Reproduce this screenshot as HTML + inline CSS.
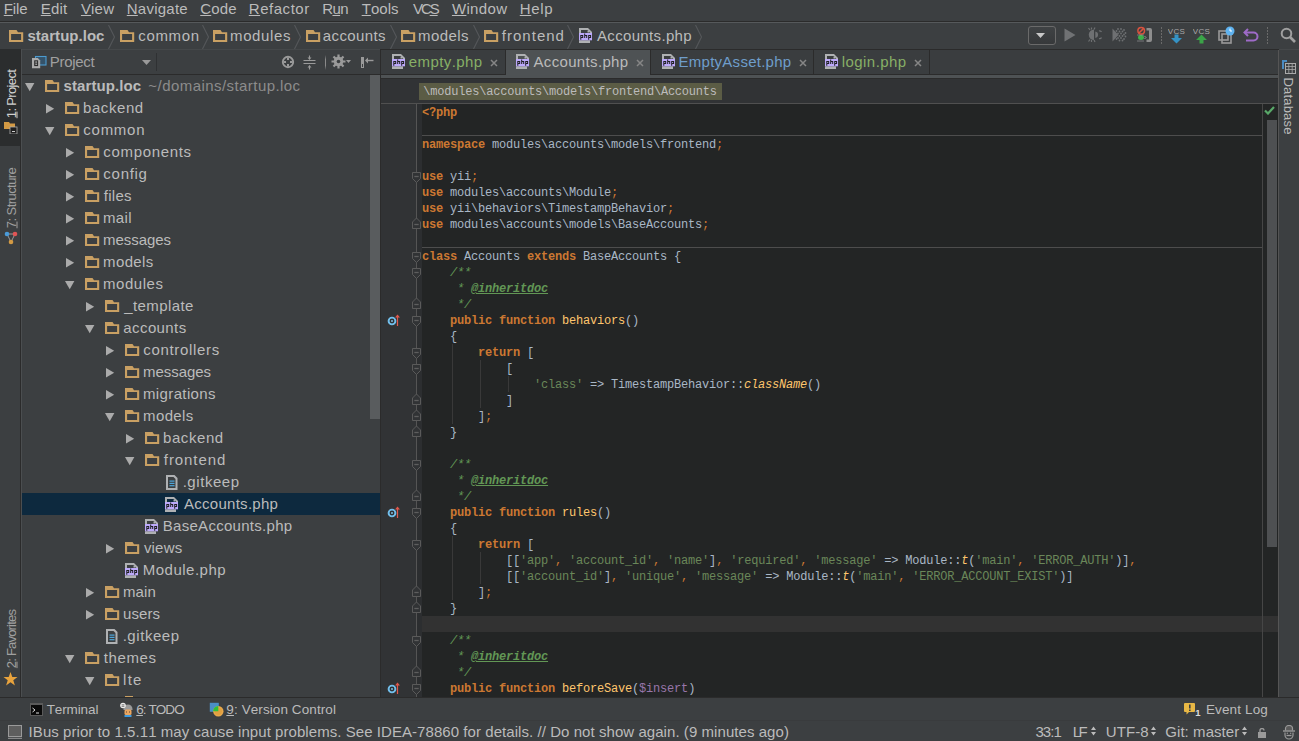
<!DOCTYPE html><html><head><meta charset="utf-8"><style>
html,body{margin:0;padding:0;width:1299px;height:741px;overflow:hidden;background:#3C3F41;}
body>div,body>span,body>svg{position:absolute;}
.t{position:absolute;white-space:pre;line-height:normal;font-kerning:none;font-family:'Liberation Sans';}
u{text-decoration:underline;text-underline-offset:1px;}
.c{position:absolute;left:422px;white-space:pre;font-family:'Liberation Mono';font-size:12px;letter-spacing:-0.2px;line-height:normal;font-kerning:none;}
</style></head><body>
<div style="left:0px;top:0px;width:1299px;height:21px;background:#3C3F41;"></div>
<div style="left:0px;top:21px;width:1299px;height:1px;background:#2B2B2B;"></div>
<div style="left:0px;top:22px;width:1299px;height:1px;background:#56595B;"></div>
<span class="t" style="left:3.77px;top:0.42px;font-size:15px;color:#BBBBBB;font-weight:normal;font-style:normal;letter-spacing:-0.091px;font-family:'Liberation Sans';"><u>F</u>ile</span>
<span class="t" style="left:40.77px;top:0.42px;font-size:15px;color:#BBBBBB;font-weight:normal;font-style:normal;letter-spacing:0.164px;font-family:'Liberation Sans';"><u>E</u>dit</span>
<span class="t" style="left:80.93px;top:0.42px;font-size:15px;color:#BBBBBB;font-weight:normal;font-style:normal;letter-spacing:0.172px;font-family:'Liberation Sans';"><u>V</u>iew</span>
<span class="t" style="left:126.77px;top:0.42px;font-size:15px;color:#BBBBBB;font-weight:normal;font-style:normal;letter-spacing:0.242px;font-family:'Liberation Sans';"><u>N</u>avigate</span>
<span class="t" style="left:200.24px;top:0.42px;font-size:15px;color:#BBBBBB;font-weight:normal;font-style:normal;letter-spacing:0.190px;font-family:'Liberation Sans';"><u>C</u>ode</span>
<span class="t" style="left:248.77px;top:0.42px;font-size:15px;color:#BBBBBB;font-weight:normal;font-style:normal;letter-spacing:0.541px;font-family:'Liberation Sans';"><u>R</u>efactor</span>
<span class="t" style="left:322.27px;top:0.42px;font-size:15px;color:#BBBBBB;font-weight:normal;font-style:normal;letter-spacing:-0.656px;font-family:'Liberation Sans';">R<u>u</u>n</span>
<span class="t" style="left:361.66px;top:0.42px;font-size:15px;color:#BBBBBB;font-weight:normal;font-style:normal;letter-spacing:0.050px;font-family:'Liberation Sans';"><u>T</u>ools</span>
<span class="t" style="left:412.93px;top:0.42px;font-size:15px;color:#BBBBBB;font-weight:normal;font-style:normal;letter-spacing:-2.044px;font-family:'Liberation Sans';">VC<u>S</u></span>
<span class="t" style="left:451.93px;top:0.42px;font-size:15px;color:#BBBBBB;font-weight:normal;font-style:normal;letter-spacing:0.336px;font-family:'Liberation Sans';"><u>W</u>indow</span>
<span class="t" style="left:519.77px;top:0.42px;font-size:15px;color:#BBBBBB;font-weight:normal;font-style:normal;letter-spacing:0.670px;font-family:'Liberation Sans';"><u>H</u>elp</span>
<div style="left:0px;top:23px;width:1299px;height:26px;background:#3C3F41;"></div>
<div style="left:0px;top:49px;width:21px;height:1px;background:#2B2D2E;"></div>
<div style="left:22px;top:49px;width:358px;height:1px;background:#45484A;"></div>
<div style="left:380px;top:49px;width:899px;height:1px;background:#2B2B2B;"></div>
<div style="left:1279px;top:49px;width:20px;height:1px;background:#45484A;"></div>
<svg style="left:9px;top:29.5px" width="15" height="13" viewBox="0 0 15 13"><path d="M0 0H7.5L9 2.2H14.2V12H0Z M2.1 4.1V9.9H12.1V4.1Z" fill="#C9A063" fill-rule="evenodd"/></svg>
<span class="t" style="left:27.47px;top:26.92px;font-size:15px;color:#BBBBBB;font-weight:bold;font-style:normal;letter-spacing:0.029px;font-family:'Liberation Sans';">startup.loc</span>
<svg style="left:108px;top:25px" width="8" height="24" viewBox="0 0 8 24"><path d="M0.5 0L6.5 12.0L0.5 24" stroke="#55585A" fill="none" stroke-width="1.1"/></svg>
<svg style="left:120px;top:29.5px" width="15" height="13" viewBox="0 0 15 13"><path d="M0 0H7.5L9 2.2H14.2V12H0Z M2.1 4.1V9.9H12.1V4.1Z" fill="#C9A063" fill-rule="evenodd"/></svg>
<span class="t" style="left:138.36px;top:26.92px;font-size:15px;color:#BBBBBB;font-weight:normal;font-style:normal;letter-spacing:0.619px;font-family:'Liberation Sans';">common</span>
<svg style="left:201.5px;top:25px" width="8" height="24" viewBox="0 0 8 24"><path d="M0.5 0L6.5 12.0L0.5 24" stroke="#55585A" fill="none" stroke-width="1.1"/></svg>
<svg style="left:213px;top:29.5px" width="15" height="13" viewBox="0 0 15 13"><path d="M0 0H7.5L9 2.2H14.2V12H0Z M2.1 4.1V9.9H12.1V4.1Z" fill="#C9A063" fill-rule="evenodd"/></svg>
<span class="t" style="left:230.00px;top:26.92px;font-size:15px;color:#BBBBBB;font-weight:normal;font-style:normal;letter-spacing:0.640px;font-family:'Liberation Sans';">modules</span>
<svg style="left:293.5px;top:25px" width="8" height="24" viewBox="0 0 8 24"><path d="M0.5 0L6.5 12.0L0.5 24" stroke="#55585A" fill="none" stroke-width="1.1"/></svg>
<svg style="left:306px;top:29.5px" width="15" height="13" viewBox="0 0 15 13"><path d="M0 0H7.5L9 2.2H14.2V12H0Z M2.1 4.1V9.9H12.1V4.1Z" fill="#C9A063" fill-rule="evenodd"/></svg>
<span class="t" style="left:322.86px;top:26.92px;font-size:15px;color:#BBBBBB;font-weight:normal;font-style:normal;letter-spacing:0.378px;font-family:'Liberation Sans';">accounts</span>
<svg style="left:390px;top:25px" width="8" height="24" viewBox="0 0 8 24"><path d="M0.5 0L6.5 12.0L0.5 24" stroke="#55585A" fill="none" stroke-width="1.1"/></svg>
<svg style="left:401px;top:29.5px" width="15" height="13" viewBox="0 0 15 13"><path d="M0 0H7.5L9 2.2H14.2V12H0Z M2.1 4.1V9.9H12.1V4.1Z" fill="#C9A063" fill-rule="evenodd"/></svg>
<span class="t" style="left:418.00px;top:26.92px;font-size:15px;color:#BBBBBB;font-weight:normal;font-style:normal;letter-spacing:0.437px;font-family:'Liberation Sans';">models</span>
<svg style="left:472.5px;top:25px" width="8" height="24" viewBox="0 0 8 24"><path d="M0.5 0L6.5 12.0L0.5 24" stroke="#55585A" fill="none" stroke-width="1.1"/></svg>
<svg style="left:484px;top:29.5px" width="15" height="13" viewBox="0 0 15 13"><path d="M0 0H7.5L9 2.2H14.2V12H0Z M2.1 4.1V9.9H12.1V4.1Z" fill="#C9A063" fill-rule="evenodd"/></svg>
<span class="t" style="left:501.79px;top:26.92px;font-size:15px;color:#BBBBBB;font-weight:normal;font-style:normal;letter-spacing:1.020px;font-family:'Liberation Sans';">frontend</span>
<svg style="left:567px;top:25px" width="8" height="24" viewBox="0 0 8 24"><path d="M0.5 0L6.5 12.0L0.5 24" stroke="#55585A" fill="none" stroke-width="1.1"/></svg>
<svg style="left:579px;top:28px" width="14" height="15" viewBox="0 0 14 15"><path d="M0 0H9L13 4V5H11V4.5L9 2.3V2H2V5H0Z" fill="#AFB1B3"/><rect x="8.5" y="2.5" width="2" height="2" fill="#AFB1B3"/><rect x="0" y="12.3" width="11" height="2.7" fill="#AFB1B3"/><rect x="0" y="5" width="13" height="7.3" fill="#BCA9FA"/><path d="M1.3 7H4.2V10H2.3V11.8H1.3ZM2.3 8V9H3.2V8Z M5.2 5.6H6.2V7H8.2V10H7.2V8H6.2V10H5.2Z M9.2 7H12.1V10H10.2V11.8H9.2ZM10.2 8V9H11.1V8Z" fill="#1F1F22" fill-rule="evenodd"/></svg>
<span class="t" style="left:596.97px;top:26.92px;font-size:15px;color:#BBBBBB;font-weight:normal;font-style:normal;letter-spacing:0.342px;font-family:'Liberation Sans';">Accounts.php</span>
<svg style="left:695px;top:25px" width="8" height="24" viewBox="0 0 8 24"><path d="M0.5 0L6.5 12.0L0.5 24" stroke="#55585A" fill="none" stroke-width="1.1"/></svg>
<div style="left:0px;top:50px;width:20px;height:648px;background:#3C3F41;"></div>
<div style="left:0px;top:49px;width:20px;height:97px;background:#2B2D2E;"></div>
<div style="left:20px;top:49px;width:1px;height:649px;background:#2B2B2B;"></div>
<div style="left:21px;top:49px;width:1px;height:649px;background:#4B4E50;"></div>
<div style="left:22px;top:50px;width:358px;height:24px;background:#3C3F41;"></div>
<div style="left:22px;top:74px;width:358px;height:1px;background:#2B2B2B;"></div>
<div style="left:22px;top:75px;width:358px;height:623px;background:#3C3F41;"></div>
<div style="left:370px;top:75px;width:10px;height:344px;background:#595C5E;"></div>
<div style="left:380px;top:50px;width:1px;height:648px;background:#2B2B2B;"></div>
<div style="left:381px;top:50px;width:897px;height:25px;background:#3A3D3F;"></div>
<div style="left:381px;top:75px;width:897px;height:3px;background:#4E5254;"></div>
<div style="left:381px;top:78px;width:897px;height:1px;background:#2B2B2B;"></div>
<div style="left:381px;top:79px;width:897px;height:24px;background:#313335;"></div>
<div style="left:381px;top:103px;width:897px;height:1px;background:#505050;"></div>
<div style="left:381px;top:104px;width:36px;height:594px;background:#313335;"></div>
<div style="left:417px;top:104px;width:5px;height:594px;background:#2C2E30;"></div>
<div style="left:416px;top:104px;width:1px;height:594px;background:#555555;"></div>
<div style="left:422px;top:104px;width:840px;height:594px;background:#232525;"></div>
<div style="left:1262px;top:104px;width:1px;height:594px;background:#464646;"></div>
<div style="left:1263px;top:104px;width:15px;height:594px;background:#232525;"></div>
<div style="left:1279px;top:50px;width:20px;height:648px;background:#3C3F41;"></div>
<div style="left:1278px;top:50px;width:1px;height:648px;background:#555555;"></div>
<div style="left:0px;top:697px;width:1299px;height:1px;background:#2B2B2B;"></div>
<div style="left:0px;top:698px;width:1299px;height:22px;background:#3C3F41;"></div>
<div style="left:0px;top:720px;width:1299px;height:1px;background:#393B3D;"></div>
<div style="left:0px;top:721px;width:1299px;height:20px;background:#3C3F41;"></div>
<svg style="left:31px;top:55px" width="16" height="15" viewBox="0 0 16 15"><rect x="4.5" y="1.5" width="10.5" height="8.5" fill="#35536A" stroke="#4C9BD0" stroke-width="1.1"/><path d="M1 3H6.8L9.2 5.4V13.2H1Z" fill="#ABABAB"/><rect x="3.2" y="5.3" width="3.9" height="5.8" fill="#2B2B2B"/><rect x="4.3" y="6.4" width="1.8" height="1.3" fill="#ABABAB"/><rect x="4.3" y="8.6" width="1.8" height="1.3" fill="#ABABAB"/></svg>
<span class="t" style="left:49.77px;top:53.42px;font-size:15px;color:#A0A0A0;font-weight:normal;font-style:normal;letter-spacing:-0.307px;font-family:'Liberation Sans';">Project</span>
<svg style="left:142px;top:60px" width="10" height="6"><path d="M0 0H9L4.5 5Z" fill="#9A9A9A"/></svg>
<div style="left:156px;top:53px;width:1px;height:18px;background:#2F3133;"></div>
<svg style="left:281px;top:55px" width="14" height="14" viewBox="0 0 14 14"><circle cx="7" cy="7" r="5.2" fill="none" stroke="#9A9A9A" stroke-width="1.9"/><path d="M7 2.5V5M7 9V11.5M2.5 7H5M9 7H11.5" stroke="#9A9A9A" stroke-width="2"/></svg>
<svg style="left:303px;top:55px" width="13" height="15" viewBox="0 0 13 15"><path d="M0.5 5.5H12.5M0.5 8.5H12.5" stroke="#9A9A9A" stroke-width="1.1"/><path d="M6.5 0.5V4.5M6.5 10.5V14.5" stroke="#9A9A9A" stroke-width="1.1"/><path d="M4.5 2.5L6.5 4.8L8.5 2.5ZM4.5 12.5L6.5 10.2L8.5 12.5Z" fill="#9A9A9A"/></svg>
<div style="left:324.5px;top:55px;width:1.5px;height:15px;background:linear-gradient(#3C3F41,#8A8A8A 30%,#8A8A8A 70%,#3C3F41)"></div>
<svg style="left:331px;top:54px" width="22" height="15" viewBox="0 0 22 15"><circle cx="7.5" cy="7.5" r="4.8" fill="#9A9A9A"/><path d="M7.5 0.5V14.5M0.5 7.5H14.5M2.5 2.5L12.5 12.5M12.5 2.5L2.5 12.5" stroke="#9A9A9A" stroke-width="2.2"/><circle cx="7.5" cy="7.5" r="1.8" fill="#3C3F41"/><path d="M15 6H20L17.5 9Z" fill="#9A9A9A"/></svg>
<svg style="left:360px;top:56px" width="15" height="13" viewBox="0 0 15 13"><rect x="1" y="1" width="3" height="11" fill="#9A9A9A"/><rect x="2" y="8" width="1" height="3" fill="#3C3F41"/><path d="M6 4.5H13.5" stroke="#9A9A9A" stroke-width="1.4"/><path d="M5 4.5L8 1.5V7.5Z" fill="#9A9A9A"/></svg>
<svg style="left:25px;top:83px" width="10" height="9"><path d="M0 0H9.4L4.7 8.2Z" fill="#ABABAB"/></svg>
<svg style="left:45px;top:80px" width="15" height="13" viewBox="0 0 15 13"><path d="M0 0H7.5L9 2.2H14.2V12H0Z M2.1 4.1V9.9H12.1V4.1Z" fill="#C9A063" fill-rule="evenodd"/></svg>
<span class="t" style="left:63.47px;top:77.42px;font-size:15px;color:#BBBBBB;font-weight:bold;font-style:normal;letter-spacing:0.099px;font-family:'Liberation Sans';">startup.loc</span>
<span class="t" style="left:148.33px;top:77.42px;font-size:15px;color:#8C8C8C;font-weight:normal;font-style:normal;letter-spacing:0.439px;font-family:'Liberation Sans';">~/domains/startup.loc</span>
<svg style="left:46px;top:103.5px" width="9" height="10"><path d="M0 0V9.4L8.2 4.7Z" fill="#ABABAB"/></svg>
<svg style="left:65px;top:102px" width="15" height="13" viewBox="0 0 15 13"><path d="M0 0H7.5L9 2.2H14.2V12H0Z M2.1 4.1V9.9H12.1V4.1Z" fill="#C9A063" fill-rule="evenodd"/></svg>
<span class="t" style="left:83.03px;top:99.42px;font-size:15px;color:#BBBBBB;font-weight:normal;font-style:normal;letter-spacing:0.570px;font-family:'Liberation Sans';">backend</span>
<svg style="left:45px;top:127px" width="10" height="9"><path d="M0 0H9.4L4.7 8.2Z" fill="#ABABAB"/></svg>
<svg style="left:65px;top:124px" width="15" height="13" viewBox="0 0 15 13"><path d="M0 0H7.5L9 2.2H14.2V12H0Z M2.1 4.1V9.9H12.1V4.1Z" fill="#C9A063" fill-rule="evenodd"/></svg>
<span class="t" style="left:83.36px;top:121.42px;font-size:15px;color:#BBBBBB;font-weight:normal;font-style:normal;letter-spacing:0.719px;font-family:'Liberation Sans';">common</span>
<svg style="left:66px;top:147.5px" width="9" height="10"><path d="M0 0V9.4L8.2 4.7Z" fill="#ABABAB"/></svg>
<svg style="left:85px;top:146px" width="15" height="13" viewBox="0 0 15 13"><path d="M0 0H7.5L9 2.2H14.2V12H0Z M2.1 4.1V9.9H12.1V4.1Z" fill="#C9A063" fill-rule="evenodd"/></svg>
<span class="t" style="left:103.36px;top:143.43px;font-size:15px;color:#BBBBBB;font-weight:normal;font-style:normal;letter-spacing:0.663px;font-family:'Liberation Sans';">components</span>
<svg style="left:66px;top:169.5px" width="9" height="10"><path d="M0 0V9.4L8.2 4.7Z" fill="#ABABAB"/></svg>
<svg style="left:85px;top:168px" width="15" height="13" viewBox="0 0 15 13"><path d="M0 0H7.5L9 2.2H14.2V12H0Z M2.1 4.1V9.9H12.1V4.1Z" fill="#C9A063" fill-rule="evenodd"/></svg>
<span class="t" style="left:103.36px;top:165.43px;font-size:15px;color:#BBBBBB;font-weight:normal;font-style:normal;letter-spacing:0.715px;font-family:'Liberation Sans';">config</span>
<svg style="left:66px;top:191.5px" width="9" height="10"><path d="M0 0V9.4L8.2 4.7Z" fill="#ABABAB"/></svg>
<svg style="left:85px;top:190px" width="15" height="13" viewBox="0 0 15 13"><path d="M0 0H7.5L9 2.2H14.2V12H0Z M2.1 4.1V9.9H12.1V4.1Z" fill="#C9A063" fill-rule="evenodd"/></svg>
<span class="t" style="left:103.79px;top:187.43px;font-size:15px;color:#BBBBBB;font-weight:normal;font-style:normal;letter-spacing:0.270px;font-family:'Liberation Sans';">files</span>
<svg style="left:66px;top:213.5px" width="9" height="10"><path d="M0 0V9.4L8.2 4.7Z" fill="#ABABAB"/></svg>
<svg style="left:85px;top:212px" width="15" height="13" viewBox="0 0 15 13"><path d="M0 0H7.5L9 2.2H14.2V12H0Z M2.1 4.1V9.9H12.1V4.1Z" fill="#C9A063" fill-rule="evenodd"/></svg>
<span class="t" style="left:103.00px;top:209.43px;font-size:15px;color:#BBBBBB;font-weight:normal;font-style:normal;letter-spacing:0.366px;font-family:'Liberation Sans';">mail</span>
<svg style="left:66px;top:235.5px" width="9" height="10"><path d="M0 0V9.4L8.2 4.7Z" fill="#ABABAB"/></svg>
<svg style="left:85px;top:234px" width="15" height="13" viewBox="0 0 15 13"><path d="M0 0H7.5L9 2.2H14.2V12H0Z M2.1 4.1V9.9H12.1V4.1Z" fill="#C9A063" fill-rule="evenodd"/></svg>
<span class="t" style="left:103.00px;top:231.43px;font-size:15px;color:#BBBBBB;font-weight:normal;font-style:normal;letter-spacing:-0.047px;font-family:'Liberation Sans';">messages</span>
<svg style="left:66px;top:257.5px" width="9" height="10"><path d="M0 0V9.4L8.2 4.7Z" fill="#ABABAB"/></svg>
<svg style="left:85px;top:256px" width="15" height="13" viewBox="0 0 15 13"><path d="M0 0H7.5L9 2.2H14.2V12H0Z M2.1 4.1V9.9H12.1V4.1Z" fill="#C9A063" fill-rule="evenodd"/></svg>
<span class="t" style="left:103.00px;top:253.43px;font-size:15px;color:#BBBBBB;font-weight:normal;font-style:normal;letter-spacing:0.397px;font-family:'Liberation Sans';">models</span>
<svg style="left:65px;top:281px" width="10" height="9"><path d="M0 0H9.4L4.7 8.2Z" fill="#ABABAB"/></svg>
<svg style="left:85px;top:278px" width="15" height="13" viewBox="0 0 15 13"><path d="M0 0H7.5L9 2.2H14.2V12H0Z M2.1 4.1V9.9H12.1V4.1Z" fill="#C9A063" fill-rule="evenodd"/></svg>
<span class="t" style="left:103.00px;top:275.43px;font-size:15px;color:#BBBBBB;font-weight:normal;font-style:normal;letter-spacing:0.540px;font-family:'Liberation Sans';">modules</span>
<svg style="left:86px;top:301.5px" width="9" height="10"><path d="M0 0V9.4L8.2 4.7Z" fill="#ABABAB"/></svg>
<svg style="left:105px;top:300px" width="15" height="13" viewBox="0 0 15 13"><path d="M0 0H7.5L9 2.2H14.2V12H0Z M2.1 4.1V9.9H12.1V4.1Z" fill="#C9A063" fill-rule="evenodd"/></svg>
<span class="t" style="left:124.23px;top:297.43px;font-size:15px;color:#BBBBBB;font-weight:normal;font-style:normal;letter-spacing:0.408px;font-family:'Liberation Sans';">_template</span>
<svg style="left:85px;top:325px" width="10" height="9"><path d="M0 0H9.4L4.7 8.2Z" fill="#ABABAB"/></svg>
<svg style="left:105px;top:322px" width="15" height="13" viewBox="0 0 15 13"><path d="M0 0H7.5L9 2.2H14.2V12H0Z M2.1 4.1V9.9H12.1V4.1Z" fill="#C9A063" fill-rule="evenodd"/></svg>
<span class="t" style="left:123.36px;top:319.43px;font-size:15px;color:#BBBBBB;font-weight:normal;font-style:normal;letter-spacing:0.392px;font-family:'Liberation Sans';">accounts</span>
<svg style="left:106px;top:345.5px" width="9" height="10"><path d="M0 0V9.4L8.2 4.7Z" fill="#ABABAB"/></svg>
<svg style="left:125px;top:344px" width="15" height="13" viewBox="0 0 15 13"><path d="M0 0H7.5L9 2.2H14.2V12H0Z M2.1 4.1V9.9H12.1V4.1Z" fill="#C9A063" fill-rule="evenodd"/></svg>
<span class="t" style="left:143.36px;top:341.43px;font-size:15px;color:#BBBBBB;font-weight:normal;font-style:normal;letter-spacing:0.659px;font-family:'Liberation Sans';">controllers</span>
<svg style="left:106px;top:367.5px" width="9" height="10"><path d="M0 0V9.4L8.2 4.7Z" fill="#ABABAB"/></svg>
<svg style="left:125px;top:366px" width="15" height="13" viewBox="0 0 15 13"><path d="M0 0H7.5L9 2.2H14.2V12H0Z M2.1 4.1V9.9H12.1V4.1Z" fill="#C9A063" fill-rule="evenodd"/></svg>
<span class="t" style="left:143.00px;top:363.43px;font-size:15px;color:#BBBBBB;font-weight:normal;font-style:normal;letter-spacing:-0.047px;font-family:'Liberation Sans';">messages</span>
<svg style="left:106px;top:389.5px" width="9" height="10"><path d="M0 0V9.4L8.2 4.7Z" fill="#ABABAB"/></svg>
<svg style="left:125px;top:388px" width="15" height="13" viewBox="0 0 15 13"><path d="M0 0H7.5L9 2.2H14.2V12H0Z M2.1 4.1V9.9H12.1V4.1Z" fill="#C9A063" fill-rule="evenodd"/></svg>
<span class="t" style="left:143.00px;top:385.43px;font-size:15px;color:#BBBBBB;font-weight:normal;font-style:normal;letter-spacing:0.372px;font-family:'Liberation Sans';">migrations</span>
<svg style="left:105px;top:413px" width="10" height="9"><path d="M0 0H9.4L4.7 8.2Z" fill="#ABABAB"/></svg>
<svg style="left:125px;top:410px" width="15" height="13" viewBox="0 0 15 13"><path d="M0 0H7.5L9 2.2H14.2V12H0Z M2.1 4.1V9.9H12.1V4.1Z" fill="#C9A063" fill-rule="evenodd"/></svg>
<span class="t" style="left:143.00px;top:407.43px;font-size:15px;color:#BBBBBB;font-weight:normal;font-style:normal;letter-spacing:0.397px;font-family:'Liberation Sans';">models</span>
<svg style="left:126px;top:433.5px" width="9" height="10"><path d="M0 0V9.4L8.2 4.7Z" fill="#ABABAB"/></svg>
<svg style="left:145px;top:432px" width="15" height="13" viewBox="0 0 15 13"><path d="M0 0H7.5L9 2.2H14.2V12H0Z M2.1 4.1V9.9H12.1V4.1Z" fill="#C9A063" fill-rule="evenodd"/></svg>
<span class="t" style="left:163.03px;top:429.43px;font-size:15px;color:#BBBBBB;font-weight:normal;font-style:normal;letter-spacing:0.570px;font-family:'Liberation Sans';">backend</span>
<svg style="left:125px;top:457px" width="10" height="9"><path d="M0 0H9.4L4.7 8.2Z" fill="#ABABAB"/></svg>
<svg style="left:145px;top:454px" width="15" height="13" viewBox="0 0 15 13"><path d="M0 0H7.5L9 2.2H14.2V12H0Z M2.1 4.1V9.9H12.1V4.1Z" fill="#C9A063" fill-rule="evenodd"/></svg>
<span class="t" style="left:163.79px;top:451.43px;font-size:15px;color:#BBBBBB;font-weight:normal;font-style:normal;letter-spacing:0.934px;font-family:'Liberation Sans';">frontend</span>
<svg style="left:166px;top:474.5px" width="12" height="15" viewBox="0 0 12 15"><path d="M0 0H8.5L11.5 3V15H0Z M2 2V13H9.5V4L7.5 2Z" fill="#AFB1B3" fill-rule="evenodd"/><rect x="3.5" y="5.5" width="5" height="1.2" fill="#4EA6DA"/><rect x="3.5" y="7.8" width="5" height="1.2" fill="#4EA6DA"/><rect x="3.5" y="10.1" width="5" height="1.2" fill="#4EA6DA"/></svg>
<span class="t" style="left:182.63px;top:473.43px;font-size:15px;color:#BBBBBB;font-weight:normal;font-style:normal;letter-spacing:0.566px;font-family:'Liberation Sans';">.gitkeep</span>
<div style="left:22px;top:493px;width:358px;height:22px;background:#0D293E;"></div>
<svg style="left:165px;top:497px" width="14" height="15" viewBox="0 0 14 15"><path d="M0 0H9L13 4V5H11V4.5L9 2.3V2H2V5H0Z" fill="#AFB1B3"/><rect x="8.5" y="2.5" width="2" height="2" fill="#AFB1B3"/><rect x="0" y="12.3" width="11" height="2.7" fill="#AFB1B3"/><rect x="0" y="5" width="13" height="7.3" fill="#BCA9FA"/><path d="M1.3 7H4.2V10H2.3V11.8H1.3ZM2.3 8V9H3.2V8Z M5.2 5.6H6.2V7H8.2V10H7.2V8H6.2V10H5.2Z M9.2 7H12.1V10H10.2V11.8H9.2ZM10.2 8V9H11.1V8Z" fill="#1F1F22" fill-rule="evenodd"/></svg>
<span class="t" style="left:183.97px;top:495.43px;font-size:15px;color:#BBBBBB;font-weight:normal;font-style:normal;letter-spacing:0.279px;font-family:'Liberation Sans';">Accounts.php</span>
<svg style="left:145px;top:519px" width="14" height="15" viewBox="0 0 14 15"><path d="M0 0H9L13 4V5H11V4.5L9 2.3V2H2V5H0Z" fill="#AFB1B3"/><rect x="8.5" y="2.5" width="2" height="2" fill="#AFB1B3"/><rect x="0" y="12.3" width="11" height="2.7" fill="#AFB1B3"/><rect x="0" y="5" width="13" height="7.3" fill="#BCA9FA"/><path d="M1.3 7H4.2V10H2.3V11.8H1.3ZM2.3 8V9H3.2V8Z M5.2 5.6H6.2V7H8.2V10H7.2V8H6.2V10H5.2Z M9.2 7H12.1V10H10.2V11.8H9.2ZM10.2 8V9H11.1V8Z" fill="#1F1F22" fill-rule="evenodd"/></svg>
<span class="t" style="left:162.77px;top:517.42px;font-size:15px;color:#BBBBBB;font-weight:normal;font-style:normal;letter-spacing:0.285px;font-family:'Liberation Sans';">BaseAccounts.php</span>
<svg style="left:106px;top:543.5px" width="9" height="10"><path d="M0 0V9.4L8.2 4.7Z" fill="#ABABAB"/></svg>
<svg style="left:125px;top:542px" width="15" height="13" viewBox="0 0 15 13"><path d="M0 0H7.5L9 2.2H14.2V12H0Z M2.1 4.1V9.9H12.1V4.1Z" fill="#C9A063" fill-rule="evenodd"/></svg>
<span class="t" style="left:143.95px;top:539.42px;font-size:15px;color:#BBBBBB;font-weight:normal;font-style:normal;letter-spacing:0.171px;font-family:'Liberation Sans';">views</span>
<svg style="left:125px;top:563px" width="14" height="15" viewBox="0 0 14 15"><path d="M0 0H9L13 4V5H11V4.5L9 2.3V2H2V5H0Z" fill="#AFB1B3"/><rect x="8.5" y="2.5" width="2" height="2" fill="#AFB1B3"/><rect x="0" y="12.3" width="11" height="2.7" fill="#AFB1B3"/><rect x="0" y="5" width="13" height="7.3" fill="#BCA9FA"/><path d="M1.3 7H4.2V10H2.3V11.8H1.3ZM2.3 8V9H3.2V8Z M5.2 5.6H6.2V7H8.2V10H7.2V8H6.2V10H5.2Z M9.2 7H12.1V10H10.2V11.8H9.2ZM10.2 8V9H11.1V8Z" fill="#1F1F22" fill-rule="evenodd"/></svg>
<span class="t" style="left:142.77px;top:561.42px;font-size:15px;color:#BBBBBB;font-weight:normal;font-style:normal;letter-spacing:0.497px;font-family:'Liberation Sans';">Module.php</span>
<svg style="left:86px;top:587.5px" width="9" height="10"><path d="M0 0V9.4L8.2 4.7Z" fill="#ABABAB"/></svg>
<svg style="left:105px;top:586px" width="15" height="13" viewBox="0 0 15 13"><path d="M0 0H7.5L9 2.2H14.2V12H0Z M2.1 4.1V9.9H12.1V4.1Z" fill="#C9A063" fill-rule="evenodd"/></svg>
<span class="t" style="left:123.00px;top:583.42px;font-size:15px;color:#BBBBBB;font-weight:normal;font-style:normal;letter-spacing:0.086px;font-family:'Liberation Sans';">main</span>
<svg style="left:86px;top:609.5px" width="9" height="10"><path d="M0 0V9.4L8.2 4.7Z" fill="#ABABAB"/></svg>
<svg style="left:105px;top:608px" width="15" height="13" viewBox="0 0 15 13"><path d="M0 0H7.5L9 2.2H14.2V12H0Z M2.1 4.1V9.9H12.1V4.1Z" fill="#C9A063" fill-rule="evenodd"/></svg>
<span class="t" style="left:123.03px;top:605.42px;font-size:15px;color:#BBBBBB;font-weight:normal;font-style:normal;letter-spacing:0.084px;font-family:'Liberation Sans';">users</span>
<svg style="left:106px;top:628.5px" width="12" height="15" viewBox="0 0 12 15"><path d="M0 0H8.5L11.5 3V15H0Z M2 2V13H9.5V4L7.5 2Z" fill="#AFB1B3" fill-rule="evenodd"/><rect x="3.5" y="5.5" width="5" height="1.2" fill="#4EA6DA"/><rect x="3.5" y="7.8" width="5" height="1.2" fill="#4EA6DA"/><rect x="3.5" y="10.1" width="5" height="1.2" fill="#4EA6DA"/></svg>
<span class="t" style="left:122.63px;top:627.42px;font-size:15px;color:#BBBBBB;font-weight:normal;font-style:normal;letter-spacing:0.566px;font-family:'Liberation Sans';">.gitkeep</span>
<svg style="left:65px;top:655px" width="10" height="9"><path d="M0 0H9.4L4.7 8.2Z" fill="#ABABAB"/></svg>
<svg style="left:85px;top:652px" width="15" height="13" viewBox="0 0 15 13"><path d="M0 0H7.5L9 2.2H14.2V12H0Z M2.1 4.1V9.9H12.1V4.1Z" fill="#C9A063" fill-rule="evenodd"/></svg>
<span class="t" style="left:103.77px;top:649.42px;font-size:15px;color:#BBBBBB;font-weight:normal;font-style:normal;letter-spacing:0.616px;font-family:'Liberation Sans';">themes</span>
<svg style="left:85px;top:677px" width="10" height="9"><path d="M0 0H9.4L4.7 8.2Z" fill="#ABABAB"/></svg>
<svg style="left:105px;top:674px" width="15" height="13" viewBox="0 0 15 13"><path d="M0 0H7.5L9 2.2H14.2V12H0Z M2.1 4.1V9.9H12.1V4.1Z" fill="#C9A063" fill-rule="evenodd"/></svg>
<span class="t" style="left:122.99px;top:671.42px;font-size:15px;color:#BBBBBB;font-weight:normal;font-style:normal;letter-spacing:1.317px;font-family:'Liberation Sans';">lte</span>
<div style="left:125px;top:696px;width:8px;height:1px;background:#C9A063;"></div>
<span class="t" style="left:10.5px;top:93.5px;font-size:13px;color:#CFCFCF;letter-spacing:-0.653px;transform:translate(-50%,-50%) rotate(-90deg);"><u>1</u>: Project</span>
<svg style="left:4px;top:121px" width="14" height="13" viewBox="0 0 14 13"><path d="M0 1H5L6 2.5H11V8H0Z" fill="#D39A44"/><rect x="6" y="6" width="7" height="7" fill="#1E1E1E" stroke="#AAAAAA" stroke-width="0.8"/><rect x="8" y="10" width="3" height="1" fill="#CCCCCC"/></svg>
<span class="t" style="left:10.5px;top:198px;font-size:13px;color:#A0A0A0;letter-spacing:-0.560px;transform:translate(-50%,-50%) rotate(-90deg);"><u>7</u>: Structure</span>
<svg style="left:4px;top:231px" width="14" height="14" viewBox="0 0 14 14"><path d="M3 3L11 3L7 11Z" stroke="#9A9A9A" stroke-width="1" fill="none"/><circle cx="3" cy="3" r="2.3" fill="#4A9AD8"/><circle cx="11" cy="3" r="2.3" fill="#E05555"/><circle cx="7" cy="11" r="2.3" fill="#D39A44"/></svg>
<span class="t" style="left:10.5px;top:638.5px;font-size:13px;color:#A0A0A0;letter-spacing:-0.807px;transform:translate(-50%,-50%) rotate(-90deg);"><u>2</u>: Favorites</span>
<svg style="left:3px;top:672px" width="15" height="14" viewBox="0 0 15 14"><path d="M7.5 0L9.3 5H14.5L10.3 8.2L11.9 13.5L7.5 10.3L3.1 13.5L4.7 8.2L0.5 5H5.7Z" fill="#E8A33D"/></svg>
<span class="t" style="left:1288px;top:106px;font-size:13px;color:#BBBBBB;letter-spacing:0.199px;transform:translate(-50%,-50%) rotate(90deg);">Database</span>
<svg style="left:1282px;top:60px" width="14" height="14" viewBox="0 0 14 14"><path d="M0 0H5V2H2V9H0Z" fill="#4A8AC0"/><rect x="3.5" y="3.5" width="10" height="10" fill="none" stroke="#AAAAAA" stroke-width="1"/><path d="M3.5 6.5H13.5M3.5 9.5H13.5M6.8 3.5V13.5M10.2 3.5V13.5" stroke="#AAAAAA" stroke-width="0.8"/></svg>
<div style="left:381px;top:74px;width:125px;height:1px;background:#2B2B2B;"></div>
<div style="left:505px;top:50px;width:1px;height:25px;background:#2B2B2B;"></div>
<svg style="left:392px;top:54px" width="14" height="15" viewBox="0 0 14 15"><path d="M0 0H9L13 4V5H11V4.5L9 2.3V2H2V5H0Z" fill="#AFB1B3"/><rect x="8.5" y="2.5" width="2" height="2" fill="#AFB1B3"/><rect x="0" y="12.3" width="11" height="2.7" fill="#AFB1B3"/><rect x="0" y="5" width="13" height="7.3" fill="#BCA9FA"/><path d="M1.3 7H4.2V10H2.3V11.8H1.3ZM2.3 8V9H3.2V8Z M5.2 5.6H6.2V7H8.2V10H7.2V8H6.2V10H5.2Z M9.2 7H12.1V10H10.2V11.8H9.2ZM10.2 8V9H11.1V8Z" fill="#1F1F22" fill-rule="evenodd"/></svg>
<span class="t" style="left:408.86px;top:53.42px;font-size:15px;color:#87AF66;font-weight:normal;font-style:normal;letter-spacing:0.403px;font-family:'Liberation Sans';">empty.php</span>
<svg style="left:490.0px;top:58.5px" width="8" height="8"><path d="M1 1L7 7M7 1L1 7" stroke="#868686" stroke-width="1.5"/></svg>
<div style="left:506px;top:50px;width:145px;height:25px;background:#4E5254;"></div>
<div style="left:650px;top:50px;width:1px;height:25px;background:#2B2B2B;"></div>
<svg style="left:516px;top:54px" width="14" height="15" viewBox="0 0 14 15"><path d="M0 0H9L13 4V5H11V4.5L9 2.3V2H2V5H0Z" fill="#AFB1B3"/><rect x="8.5" y="2.5" width="2" height="2" fill="#AFB1B3"/><rect x="0" y="12.3" width="11" height="2.7" fill="#AFB1B3"/><rect x="0" y="5" width="13" height="7.3" fill="#BCA9FA"/><path d="M1.3 7H4.2V10H2.3V11.8H1.3ZM2.3 8V9H3.2V8Z M5.2 5.6H6.2V7H8.2V10H7.2V8H6.2V10H5.2Z M9.2 7H12.1V10H10.2V11.8H9.2ZM10.2 8V9H11.1V8Z" fill="#1F1F22" fill-rule="evenodd"/></svg>
<span class="t" style="left:533.47px;top:53.42px;font-size:15px;color:#BBBBBB;font-weight:normal;font-style:normal;letter-spacing:0.342px;font-family:'Liberation Sans';">Accounts.php</span>
<svg style="left:636.0px;top:58.5px" width="8" height="8"><path d="M1 1L7 7M7 1L1 7" stroke="#868686" stroke-width="1.5"/></svg>
<div style="left:651px;top:74px;width:163px;height:1px;background:#2B2B2B;"></div>
<div style="left:813px;top:50px;width:1px;height:25px;background:#2B2B2B;"></div>
<svg style="left:662px;top:54px" width="14" height="15" viewBox="0 0 14 15"><path d="M0 0H9L13 4V5H11V4.5L9 2.3V2H2V5H0Z" fill="#AFB1B3"/><rect x="8.5" y="2.5" width="2" height="2" fill="#AFB1B3"/><rect x="0" y="12.3" width="11" height="2.7" fill="#AFB1B3"/><rect x="0" y="5" width="13" height="7.3" fill="#BCA9FA"/><path d="M1.3 7H4.2V10H2.3V11.8H1.3ZM2.3 8V9H3.2V8Z M5.2 5.6H6.2V7H8.2V10H7.2V8H6.2V10H5.2Z M9.2 7H12.1V10H10.2V11.8H9.2ZM10.2 8V9H11.1V8Z" fill="#1F1F22" fill-rule="evenodd"/></svg>
<span class="t" style="left:678.57px;top:53.42px;font-size:15px;color:#6F9DCB;font-weight:normal;font-style:normal;letter-spacing:0.257px;font-family:'Liberation Sans';">EmptyAsset.php</span>
<svg style="left:799.0px;top:58.5px" width="8" height="8"><path d="M1 1L7 7M7 1L1 7" stroke="#868686" stroke-width="1.5"/></svg>
<div style="left:814px;top:74px;width:116px;height:1px;background:#2B2B2B;"></div>
<div style="left:929px;top:50px;width:1px;height:25px;background:#2B2B2B;"></div>
<svg style="left:825px;top:54px" width="14" height="15" viewBox="0 0 14 15"><path d="M0 0H9L13 4V5H11V4.5L9 2.3V2H2V5H0Z" fill="#AFB1B3"/><rect x="8.5" y="2.5" width="2" height="2" fill="#AFB1B3"/><rect x="0" y="12.3" width="11" height="2.7" fill="#AFB1B3"/><rect x="0" y="5" width="13" height="7.3" fill="#BCA9FA"/><path d="M1.3 7H4.2V10H2.3V11.8H1.3ZM2.3 8V9H3.2V8Z M5.2 5.6H6.2V7H8.2V10H7.2V8H6.2V10H5.2Z M9.2 7H12.1V10H10.2V11.8H9.2ZM10.2 8V9H11.1V8Z" fill="#1F1F22" fill-rule="evenodd"/></svg>
<span class="t" style="left:841.79px;top:53.42px;font-size:15px;color:#87AF66;font-weight:normal;font-style:normal;letter-spacing:0.432px;font-family:'Liberation Sans';">login.php</span>
<svg style="left:914.0px;top:58.5px" width="8" height="8"><path d="M1 1L7 7M7 1L1 7" stroke="#868686" stroke-width="1.5"/></svg>
<div style="left:930px;top:74px;width:348px;height:1px;background:#2B2B2B;"></div>
<div style="left:419px;top:83px;width:303px;height:17px;background:#5B5C45;"></div>
<span class="t" style="left:423.33px;top:85.00px;font-size:12px;color:#BBBBBB;font-weight:normal;font-style:normal;letter-spacing:-0.214px;font-family:'Liberation Mono';">\modules\accounts\models\frontend\Accounts</span>
<div style="left:422px;top:616px;width:856px;height:16px;background:#323232;"></div>
<div style="left:1262px;top:616px;width:1px;height:16px;background:#464646;"></div>
<div style="left:422px;top:135px;width:840px;height:1px;background:#4D4D4D;"></div>
<div style="left:422px;top:247px;width:840px;height:1px;background:#4D4D4D;"></div>
<div style="left:451.5px;top:344px;width:1px;height:80px;background:#393939;"></div>
<div style="left:479.5px;top:360px;width:1px;height:48px;background:#393939;"></div>
<div style="left:507.5px;top:376px;width:1px;height:16px;background:#393939;"></div>
<div style="left:451.5px;top:536px;width:1px;height:64px;background:#393939;"></div>
<div style="left:479.5px;top:552px;width:1px;height:32px;background:#393939;"></div>
<span class="c" style="top:106.00px"><span style="color:#CC7832;font-weight:bold;font-style:normal;">&lt;?php</span></span>
<span class="c" style="top:138.00px"><span style="color:#CC7832;font-weight:bold;font-style:normal;">namespace</span><span style="color:#A9B7C6;font-weight:normal;font-style:normal;"> modules\accounts\models\frontend</span><span style="color:#CC7832;font-weight:normal;font-style:normal;">;</span></span>
<span class="c" style="top:170.00px"><span style="color:#CC7832;font-weight:bold;font-style:normal;">use</span><span style="color:#A9B7C6;font-weight:normal;font-style:normal;"> yii</span><span style="color:#CC7832;font-weight:normal;font-style:normal;">;</span></span>
<span class="c" style="top:186.00px"><span style="color:#CC7832;font-weight:bold;font-style:normal;">use</span><span style="color:#A9B7C6;font-weight:normal;font-style:normal;"> modules\accounts\Module</span><span style="color:#CC7832;font-weight:normal;font-style:normal;">;</span></span>
<span class="c" style="top:202.00px"><span style="color:#CC7832;font-weight:bold;font-style:normal;">use</span><span style="color:#A9B7C6;font-weight:normal;font-style:normal;"> yii\behaviors\TimestampBehavior</span><span style="color:#CC7832;font-weight:normal;font-style:normal;">;</span></span>
<span class="c" style="top:218.00px"><span style="color:#CC7832;font-weight:bold;font-style:normal;">use</span><span style="color:#A9B7C6;font-weight:normal;font-style:normal;"> modules\accounts\models\BaseAccounts</span><span style="color:#CC7832;font-weight:normal;font-style:normal;">;</span></span>
<span class="c" style="top:250.00px"><span style="color:#CC7832;font-weight:bold;font-style:normal;">class</span><span style="color:#A9B7C6;font-weight:normal;font-style:normal;"> Accounts </span><span style="color:#CC7832;font-weight:bold;font-style:normal;">extends</span><span style="color:#A9B7C6;font-weight:normal;font-style:normal;"> BaseAccounts {</span></span>
<span class="c" style="top:266.00px"><span style="color:#A9B7C6;font-weight:normal;font-style:normal;">    </span><span style="color:#629755;font-weight:normal;font-style:italic;">/**</span></span>
<span class="c" style="top:282.00px"><span style="color:#A9B7C6;font-weight:normal;font-style:normal;">     </span><span style="color:#629755;font-weight:normal;font-style:italic;">* </span><span style="color:#629755;font-weight:bold;font-style:italic;text-decoration:underline;">@inheritdoc</span></span>
<span class="c" style="top:298.00px"><span style="color:#A9B7C6;font-weight:normal;font-style:normal;">     </span><span style="color:#629755;font-weight:normal;font-style:italic;">*/</span></span>
<span class="c" style="top:314.00px"><span style="color:#A9B7C6;font-weight:normal;font-style:normal;">    </span><span style="color:#CC7832;font-weight:bold;font-style:normal;">public</span><span style="color:#A9B7C6;font-weight:normal;font-style:normal;"> </span><span style="color:#CC7832;font-weight:bold;font-style:normal;">function</span><span style="color:#A9B7C6;font-weight:normal;font-style:normal;"> </span><span style="color:#FFC66D;font-weight:normal;font-style:normal;">behaviors</span><span style="color:#A9B7C6;font-weight:normal;font-style:normal;">()</span></span>
<span class="c" style="top:330.00px"><span style="color:#A9B7C6;font-weight:normal;font-style:normal;">    {</span></span>
<span class="c" style="top:346.00px"><span style="color:#A9B7C6;font-weight:normal;font-style:normal;">        </span><span style="color:#CC7832;font-weight:bold;font-style:normal;">return</span><span style="color:#A9B7C6;font-weight:normal;font-style:normal;"> [</span></span>
<span class="c" style="top:362.00px"><span style="color:#A9B7C6;font-weight:normal;font-style:normal;">            [</span></span>
<span class="c" style="top:378.00px"><span style="color:#A9B7C6;font-weight:normal;font-style:normal;">                </span><span style="color:#6A8759;font-weight:normal;font-style:normal;">&#x27;class&#x27;</span><span style="color:#A9B7C6;font-weight:normal;font-style:normal;"> =&gt; TimestampBehavior::</span><span style="color:#FFC66D;font-weight:normal;font-style:italic;">className</span><span style="color:#A9B7C6;font-weight:normal;font-style:normal;">()</span></span>
<span class="c" style="top:394.00px"><span style="color:#A9B7C6;font-weight:normal;font-style:normal;">            ]</span></span>
<span class="c" style="top:410.00px"><span style="color:#A9B7C6;font-weight:normal;font-style:normal;">        ]</span><span style="color:#CC7832;font-weight:normal;font-style:normal;">;</span></span>
<span class="c" style="top:426.00px"><span style="color:#A9B7C6;font-weight:normal;font-style:normal;">    }</span></span>
<span class="c" style="top:458.00px"><span style="color:#A9B7C6;font-weight:normal;font-style:normal;">    </span><span style="color:#629755;font-weight:normal;font-style:italic;">/**</span></span>
<span class="c" style="top:474.00px"><span style="color:#A9B7C6;font-weight:normal;font-style:normal;">     </span><span style="color:#629755;font-weight:normal;font-style:italic;">* </span><span style="color:#629755;font-weight:bold;font-style:italic;text-decoration:underline;">@inheritdoc</span></span>
<span class="c" style="top:490.00px"><span style="color:#A9B7C6;font-weight:normal;font-style:normal;">     </span><span style="color:#629755;font-weight:normal;font-style:italic;">*/</span></span>
<span class="c" style="top:506.00px"><span style="color:#A9B7C6;font-weight:normal;font-style:normal;">    </span><span style="color:#CC7832;font-weight:bold;font-style:normal;">public</span><span style="color:#A9B7C6;font-weight:normal;font-style:normal;"> </span><span style="color:#CC7832;font-weight:bold;font-style:normal;">function</span><span style="color:#A9B7C6;font-weight:normal;font-style:normal;"> </span><span style="color:#FFC66D;font-weight:normal;font-style:normal;">rules</span><span style="color:#A9B7C6;font-weight:normal;font-style:normal;">()</span></span>
<span class="c" style="top:522.00px"><span style="color:#A9B7C6;font-weight:normal;font-style:normal;">    {</span></span>
<span class="c" style="top:538.00px"><span style="color:#A9B7C6;font-weight:normal;font-style:normal;">        </span><span style="color:#CC7832;font-weight:bold;font-style:normal;">return</span><span style="color:#A9B7C6;font-weight:normal;font-style:normal;"> [</span></span>
<span class="c" style="top:554.00px"><span style="color:#A9B7C6;font-weight:normal;font-style:normal;">            [[</span><span style="color:#6A8759;font-weight:normal;font-style:normal;">&#x27;app&#x27;</span><span style="color:#CC7832;font-weight:normal;font-style:normal;">, </span><span style="color:#6A8759;font-weight:normal;font-style:normal;">&#x27;account_id&#x27;</span><span style="color:#CC7832;font-weight:normal;font-style:normal;">, </span><span style="color:#6A8759;font-weight:normal;font-style:normal;">&#x27;name&#x27;</span><span style="color:#A9B7C6;font-weight:normal;font-style:normal;">]</span><span style="color:#CC7832;font-weight:normal;font-style:normal;">, </span><span style="color:#6A8759;font-weight:normal;font-style:normal;">&#x27;required&#x27;</span><span style="color:#CC7832;font-weight:normal;font-style:normal;">, </span><span style="color:#6A8759;font-weight:normal;font-style:normal;">&#x27;message&#x27;</span><span style="color:#A9B7C6;font-weight:normal;font-style:normal;"> =&gt; Module::</span><span style="color:#FFC66D;font-weight:normal;font-style:italic;">t</span><span style="color:#A9B7C6;font-weight:normal;font-style:normal;">(</span><span style="color:#6A8759;font-weight:normal;font-style:normal;">&#x27;main&#x27;</span><span style="color:#CC7832;font-weight:normal;font-style:normal;">, </span><span style="color:#6A8759;font-weight:normal;font-style:normal;">&#x27;ERROR_AUTH&#x27;</span><span style="color:#A9B7C6;font-weight:normal;font-style:normal;">)]</span><span style="color:#CC7832;font-weight:normal;font-style:normal;">,</span></span>
<span class="c" style="top:570.00px"><span style="color:#A9B7C6;font-weight:normal;font-style:normal;">            [[</span><span style="color:#6A8759;font-weight:normal;font-style:normal;">&#x27;account_id&#x27;</span><span style="color:#A9B7C6;font-weight:normal;font-style:normal;">]</span><span style="color:#CC7832;font-weight:normal;font-style:normal;">, </span><span style="color:#6A8759;font-weight:normal;font-style:normal;">&#x27;unique&#x27;</span><span style="color:#CC7832;font-weight:normal;font-style:normal;">, </span><span style="color:#6A8759;font-weight:normal;font-style:normal;">&#x27;message&#x27;</span><span style="color:#A9B7C6;font-weight:normal;font-style:normal;"> =&gt; Module::</span><span style="color:#FFC66D;font-weight:normal;font-style:italic;">t</span><span style="color:#A9B7C6;font-weight:normal;font-style:normal;">(</span><span style="color:#6A8759;font-weight:normal;font-style:normal;">&#x27;main&#x27;</span><span style="color:#CC7832;font-weight:normal;font-style:normal;">, </span><span style="color:#6A8759;font-weight:normal;font-style:normal;">&#x27;ERROR_ACCOUNT_EXIST&#x27;</span><span style="color:#A9B7C6;font-weight:normal;font-style:normal;">)]</span></span>
<span class="c" style="top:586.00px"><span style="color:#A9B7C6;font-weight:normal;font-style:normal;">        ]</span><span style="color:#CC7832;font-weight:normal;font-style:normal;">;</span></span>
<span class="c" style="top:602.00px"><span style="color:#A9B7C6;font-weight:normal;font-style:normal;">    }</span></span>
<span class="c" style="top:634.00px"><span style="color:#A9B7C6;font-weight:normal;font-style:normal;">    </span><span style="color:#629755;font-weight:normal;font-style:italic;">/**</span></span>
<span class="c" style="top:650.00px"><span style="color:#A9B7C6;font-weight:normal;font-style:normal;">     </span><span style="color:#629755;font-weight:normal;font-style:italic;">* </span><span style="color:#629755;font-weight:bold;font-style:italic;text-decoration:underline;">@inheritdoc</span></span>
<span class="c" style="top:666.00px"><span style="color:#A9B7C6;font-weight:normal;font-style:normal;">     </span><span style="color:#629755;font-weight:normal;font-style:italic;">*/</span></span>
<span class="c" style="top:682.00px"><span style="color:#A9B7C6;font-weight:normal;font-style:normal;">    </span><span style="color:#CC7832;font-weight:bold;font-style:normal;">public</span><span style="color:#A9B7C6;font-weight:normal;font-style:normal;"> </span><span style="color:#CC7832;font-weight:bold;font-style:normal;">function</span><span style="color:#A9B7C6;font-weight:normal;font-style:normal;"> </span><span style="color:#FFC66D;font-weight:normal;font-style:normal;">beforeSave</span><span style="color:#A9B7C6;font-weight:normal;font-style:normal;">(</span><span style="color:#9876AA;font-weight:normal;font-style:normal;">$insert</span><span style="color:#A9B7C6;font-weight:normal;font-style:normal;">)</span></span>
<svg style="left:412px;top:168px" width="9" height="16" viewBox="0 0 9 16"><path d="M0.5 4.5H8.5V10.5L4.5 14.5L0.5 10.5Z" fill="#313335" stroke="#5A5A5A" stroke-width="1"/><path d="M2.3 8.5H6.7" stroke="#5E5E5E" stroke-width="1.3"/></svg>
<svg style="left:412px;top:248px" width="9" height="16" viewBox="0 0 9 16"><path d="M0.5 4.5H8.5V10.5L4.5 14.5L0.5 10.5Z" fill="#313335" stroke="#5A5A5A" stroke-width="1"/><path d="M2.3 8.5H6.7" stroke="#5E5E5E" stroke-width="1.3"/></svg>
<svg style="left:412px;top:264px" width="9" height="16" viewBox="0 0 9 16"><path d="M0.5 4.5H8.5V10.5L4.5 14.5L0.5 10.5Z" fill="#313335" stroke="#5A5A5A" stroke-width="1"/><path d="M2.3 8.5H6.7" stroke="#5E5E5E" stroke-width="1.3"/></svg>
<svg style="left:412px;top:312px" width="9" height="16" viewBox="0 0 9 16"><path d="M0.5 4.5H8.5V10.5L4.5 14.5L0.5 10.5Z" fill="#313335" stroke="#5A5A5A" stroke-width="1"/><path d="M2.3 8.5H6.7" stroke="#5E5E5E" stroke-width="1.3"/></svg>
<svg style="left:412px;top:344px" width="9" height="16" viewBox="0 0 9 16"><path d="M0.5 4.5H8.5V10.5L4.5 14.5L0.5 10.5Z" fill="#313335" stroke="#5A5A5A" stroke-width="1"/><path d="M2.3 8.5H6.7" stroke="#5E5E5E" stroke-width="1.3"/></svg>
<svg style="left:412px;top:360px" width="9" height="16" viewBox="0 0 9 16"><path d="M0.5 4.5H8.5V10.5L4.5 14.5L0.5 10.5Z" fill="#313335" stroke="#5A5A5A" stroke-width="1"/><path d="M2.3 8.5H6.7" stroke="#5E5E5E" stroke-width="1.3"/></svg>
<svg style="left:412px;top:456px" width="9" height="16" viewBox="0 0 9 16"><path d="M0.5 4.5H8.5V10.5L4.5 14.5L0.5 10.5Z" fill="#313335" stroke="#5A5A5A" stroke-width="1"/><path d="M2.3 8.5H6.7" stroke="#5E5E5E" stroke-width="1.3"/></svg>
<svg style="left:412px;top:504px" width="9" height="16" viewBox="0 0 9 16"><path d="M0.5 4.5H8.5V10.5L4.5 14.5L0.5 10.5Z" fill="#313335" stroke="#5A5A5A" stroke-width="1"/><path d="M2.3 8.5H6.7" stroke="#5E5E5E" stroke-width="1.3"/></svg>
<svg style="left:412px;top:536px" width="9" height="16" viewBox="0 0 9 16"><path d="M0.5 4.5H8.5V10.5L4.5 14.5L0.5 10.5Z" fill="#313335" stroke="#5A5A5A" stroke-width="1"/><path d="M2.3 8.5H6.7" stroke="#5E5E5E" stroke-width="1.3"/></svg>
<svg style="left:412px;top:632px" width="9" height="16" viewBox="0 0 9 16"><path d="M0.5 4.5H8.5V10.5L4.5 14.5L0.5 10.5Z" fill="#313335" stroke="#5A5A5A" stroke-width="1"/><path d="M2.3 8.5H6.7" stroke="#5E5E5E" stroke-width="1.3"/></svg>
<svg style="left:412px;top:680px" width="9" height="16" viewBox="0 0 9 16"><path d="M0.5 4.5H8.5V10.5L4.5 14.5L0.5 10.5Z" fill="#313335" stroke="#5A5A5A" stroke-width="1"/><path d="M2.3 8.5H6.7" stroke="#5E5E5E" stroke-width="1.3"/></svg>
<svg style="left:412px;top:216px" width="9" height="16" viewBox="0 0 9 16"><path d="M0.5 12.5H8.5V6L4.5 2L0.5 6Z" fill="#313335" stroke="#5A5A5A" stroke-width="1"/><path d="M2.3 8.5H6.7" stroke="#5E5E5E" stroke-width="1.3"/></svg>
<svg style="left:412px;top:296px" width="9" height="16" viewBox="0 0 9 16"><path d="M0.5 12.5H8.5V6L4.5 2L0.5 6Z" fill="#313335" stroke="#5A5A5A" stroke-width="1"/><path d="M2.3 8.5H6.7" stroke="#5E5E5E" stroke-width="1.3"/></svg>
<svg style="left:412px;top:392px" width="9" height="16" viewBox="0 0 9 16"><path d="M0.5 12.5H8.5V6L4.5 2L0.5 6Z" fill="#313335" stroke="#5A5A5A" stroke-width="1"/><path d="M2.3 8.5H6.7" stroke="#5E5E5E" stroke-width="1.3"/></svg>
<svg style="left:412px;top:408px" width="9" height="16" viewBox="0 0 9 16"><path d="M0.5 12.5H8.5V6L4.5 2L0.5 6Z" fill="#313335" stroke="#5A5A5A" stroke-width="1"/><path d="M2.3 8.5H6.7" stroke="#5E5E5E" stroke-width="1.3"/></svg>
<svg style="left:412px;top:424px" width="9" height="16" viewBox="0 0 9 16"><path d="M0.5 12.5H8.5V6L4.5 2L0.5 6Z" fill="#313335" stroke="#5A5A5A" stroke-width="1"/><path d="M2.3 8.5H6.7" stroke="#5E5E5E" stroke-width="1.3"/></svg>
<svg style="left:412px;top:488px" width="9" height="16" viewBox="0 0 9 16"><path d="M0.5 12.5H8.5V6L4.5 2L0.5 6Z" fill="#313335" stroke="#5A5A5A" stroke-width="1"/><path d="M2.3 8.5H6.7" stroke="#5E5E5E" stroke-width="1.3"/></svg>
<svg style="left:412px;top:584px" width="9" height="16" viewBox="0 0 9 16"><path d="M0.5 12.5H8.5V6L4.5 2L0.5 6Z" fill="#313335" stroke="#5A5A5A" stroke-width="1"/><path d="M2.3 8.5H6.7" stroke="#5E5E5E" stroke-width="1.3"/></svg>
<svg style="left:412px;top:600px" width="9" height="16" viewBox="0 0 9 16"><path d="M0.5 12.5H8.5V6L4.5 2L0.5 6Z" fill="#313335" stroke="#5A5A5A" stroke-width="1"/><path d="M2.3 8.5H6.7" stroke="#5E5E5E" stroke-width="1.3"/></svg>
<svg style="left:412px;top:664px" width="9" height="16" viewBox="0 0 9 16"><path d="M0.5 12.5H8.5V6L4.5 2L0.5 6Z" fill="#313335" stroke="#5A5A5A" stroke-width="1"/><path d="M2.3 8.5H6.7" stroke="#5E5E5E" stroke-width="1.3"/></svg>
<svg style="left:387px;top:312px" width="14" height="16" viewBox="0 0 14 16"><circle cx="5" cy="9" r="3.4" fill="#2E3133" stroke="#72BFEC" stroke-width="1.9"/><rect x="4.2" y="8.2" width="1.6" height="1.6" fill="#8ED6FF"/><path d="M10.5 14V5" stroke="#E0584C" stroke-width="1.2"/><path d="M8 5.5L10.5 2.5L13 5.5Z" fill="#E0584C"/></svg>
<svg style="left:387px;top:504px" width="14" height="16" viewBox="0 0 14 16"><circle cx="5" cy="9" r="3.4" fill="#2E3133" stroke="#72BFEC" stroke-width="1.9"/><rect x="4.2" y="8.2" width="1.6" height="1.6" fill="#8ED6FF"/><path d="M10.5 14V5" stroke="#E0584C" stroke-width="1.2"/><path d="M8 5.5L10.5 2.5L13 5.5Z" fill="#E0584C"/></svg>
<svg style="left:387px;top:680px" width="14" height="16" viewBox="0 0 14 16"><circle cx="5" cy="9" r="3.4" fill="#2E3133" stroke="#72BFEC" stroke-width="1.9"/><rect x="4.2" y="8.2" width="1.6" height="1.6" fill="#8ED6FF"/><path d="M10.5 14V5" stroke="#E0584C" stroke-width="1.2"/><path d="M8 5.5L10.5 2.5L13 5.5Z" fill="#E0584C"/></svg>
<svg style="left:1264px;top:106px" width="11" height="9" viewBox="0 0 11 9"><path d="M1 4.5L4 7.5L10 1" stroke="#59A869" stroke-width="2.2" fill="none"/></svg>
<div style="left:1267px;top:120px;width:10px;height:427px;background:#4E5052;"></div>
<div style="left:1028px;top:26px;width:28px;height:19px;border:1px solid #6A6A6A;border-radius:3px;background:linear-gradient(#3F4244,#37393B);box-sizing:border-box"></div>
<svg style="left:1036px;top:33px" width="10" height="6"><path d="M0 0H9L4.5 5Z" fill="#C8C8C8"/></svg>
<svg style="left:1064px;top:28px" width="12" height="14"><path d="M0.5 0.5V13.5L11.5 7Z" fill="#707274"/></svg>
<svg style="left:1087px;top:27px" width="16" height="16" viewBox="0 0 16 16"><path d="M7 2.5A5.2 5.2 0 0 0 7 13Z" fill="#6E7072"/><path d="M8.3 4.5A3.3 3.3 0 0 1 8.3 11Z" fill="#6E7072"/><path d="M12 4A2 2 0 0 1 14.5 5M12 11.5A2 2 0 0 0 14.5 10.5M1.5 1L3 3M4.5 0.5V2.5M8 0.5L7 2.5M1.5 14.5L3 12.5M4.5 15V13M8 15L7 13" stroke="#6E7072" stroke-width="1.2" fill="none"/></svg>
<svg style="left:1112px;top:27px" width="16" height="16" viewBox="0 0 16 16"><path d="M0.5 1.5V14.5L6.5 8Z" fill="#6E7072"/><circle cx="6" cy="2" r="0.9" fill="#6E7072"/><circle cx="9" cy="2" r="0.9" fill="#6E7072"/><circle cx="12" cy="3" r="0.9" fill="#6E7072"/><circle cx="7.5" cy="4.5" r="0.9" fill="#6E7072"/><circle cx="10.5" cy="4.5" r="0.9" fill="#6E7072"/><circle cx="13.5" cy="6" r="0.9" fill="#6E7072"/><circle cx="6" cy="6.5" r="0.9" fill="#6E7072"/><circle cx="9" cy="6.5" r="0.9" fill="#6E7072"/><circle cx="12" cy="7.5" r="0.9" fill="#6E7072"/><circle cx="7.5" cy="9" r="0.9" fill="#6E7072"/><circle cx="10.5" cy="9" r="0.9" fill="#6E7072"/><circle cx="13.5" cy="9.5" r="0.9" fill="#6E7072"/><circle cx="6" cy="11" r="0.9" fill="#6E7072"/><circle cx="9" cy="11" r="0.9" fill="#6E7072"/><circle cx="12" cy="12" r="0.9" fill="#6E7072"/><circle cx="7.5" cy="13.5" r="0.9" fill="#6E7072"/><circle cx="10.5" cy="13.5" r="0.9" fill="#6E7072"/><circle cx="4.5" cy="4" r="0.9" fill="#6E7072"/><circle cx="4.5" cy="12" r="0.9" fill="#6E7072"/></svg>
<svg style="left:1137px;top:26px" width="16" height="17" viewBox="0 0 16 17"><circle cx="4.2" cy="4.8" r="3.3" fill="none" stroke="#D9533F" stroke-width="1.5"/><path d="M2 7L6.4 2.6" stroke="#D9533F" stroke-width="1.5"/><path d="M9.5 2H13A2 2 0 0 1 15 4V14A2 2 0 0 1 13 16H9.5V13.5H12V4.5H9.5Z" fill="#8E8E8E"/><path d="M1 11.5A3 2.5 0 0 1 7 11.5A3 2.5 0 0 1 1 11.5Z" fill="#3DB34A"/><path d="M7.5 10L9 11.5L7.5 13" stroke="#9A9A9A" stroke-width="1" fill="none"/><path d="M0.5 9H7M0.5 15H7" stroke="#CCCCCC" stroke-width="0.8" stroke-dasharray="1 1"/></svg>
<div style="left:1161px;top:27px;width:1px;height:1.5px;background:#6A6A6A;"></div>
<div style="left:1161px;top:30px;width:1px;height:1.5px;background:#6A6A6A;"></div>
<div style="left:1161px;top:33px;width:1px;height:1.5px;background:#6A6A6A;"></div>
<div style="left:1161px;top:36px;width:1px;height:1.5px;background:#6A6A6A;"></div>
<div style="left:1161px;top:39px;width:1px;height:1.5px;background:#6A6A6A;"></div>
<div style="left:1161px;top:42px;width:1px;height:1.5px;background:#6A6A6A;"></div>
<div style="left:1267px;top:27px;width:1px;height:1.5px;background:#6A6A6A;"></div>
<div style="left:1267px;top:30px;width:1px;height:1.5px;background:#6A6A6A;"></div>
<div style="left:1267px;top:33px;width:1px;height:1.5px;background:#6A6A6A;"></div>
<div style="left:1267px;top:36px;width:1px;height:1.5px;background:#6A6A6A;"></div>
<div style="left:1267px;top:39px;width:1px;height:1.5px;background:#6A6A6A;"></div>
<div style="left:1267px;top:42px;width:1px;height:1.5px;background:#6A6A6A;"></div>
<svg style="left:1168px;top:26px" width="17" height="19" viewBox="0 0 17 19"><text x="8.5" y="7.5" font-family="Liberation Sans" font-size="8" text-anchor="middle" fill="#A9A9A9" letter-spacing="0.3">VCS</text><path d="M6.5 8.5H10.5V12H14L8.5 17.5L3 12H6.5Z" fill="#3592C4"/></svg>
<svg style="left:1193px;top:26px" width="17" height="19" viewBox="0 0 17 19"><text x="8.5" y="7.5" font-family="Liberation Sans" font-size="8" text-anchor="middle" fill="#A9A9A9" letter-spacing="0.3">VCS</text><path d="M6.5 17.5H10.5V14H14L8.5 8.5L3 14H6.5Z" fill="#3BA348"/></svg>
<svg style="left:1218px;top:26px" width="17" height="18" viewBox="0 0 17 18"><rect x="1" y="5" width="9" height="9" fill="none" stroke="#9A9A9A" stroke-width="1.6"/><rect x="4" y="8" width="9" height="9" fill="none" stroke="#9A9A9A" stroke-width="1.6"/><circle cx="12" cy="5" r="4.5" fill="#5FB3F0"/><path d="M12 2.5V5H14" stroke="#FFFFFF" stroke-width="1" fill="none"/></svg>
<svg style="left:1243px;top:27px" width="16" height="16" viewBox="0 0 16 16"><path d="M5 2L1.5 5.5L5 9" stroke="#9E6BC8" stroke-width="2" fill="none"/><path d="M2 5.5H10.5A4 4 0 0 1 10.5 13.5H3" stroke="#9E6BC8" stroke-width="2" fill="none"/></svg>
<svg style="left:1280px;top:27px" width="16" height="16" viewBox="0 0 16 16"><circle cx="6.5" cy="6.5" r="4.8" fill="none" stroke="#A0A0A0" stroke-width="2"/><path d="M10 10L15 15" stroke="#A0A0A0" stroke-width="2.6"/></svg>
<svg style="left:30px;top:703px" width="13" height="13" viewBox="0 0 13 13"><rect x="0" y="0" width="13" height="13" fill="#5A5A5A"/><rect x="1" y="2" width="11" height="10" fill="#0A0A0A"/><path d="M2.5 5L5 7L2.5 9" stroke="#DDDDDD" stroke-width="1" fill="none"/><path d="M6 10H9" stroke="#DDDDDD" stroke-width="1"/></svg>
<span class="t" style="left:46.70px;top:701.78px;font-size:13.5px;color:#BBBBBB;font-weight:normal;font-style:normal;letter-spacing:-0.115px;font-family:'Liberation Sans';">Terminal</span>
<svg style="left:120px;top:702px" width="14" height="15" viewBox="0 0 14 15"><path d="M3.5 7A4.5 4.5 0 0 1 12.5 7V8H3.5Z" fill="#9A9A9A"/><rect x="4.5" y="7.5" width="7" height="5.5" rx="1.5" fill="#EBA660"/><rect x="6" y="9.5" width="1" height="1" fill="#5A4030"/><rect x="9" y="9.5" width="1" height="1" fill="#5A4030"/><rect x="4.5" y="13" width="7" height="2" fill="#3E9BE0"/><circle cx="3" cy="3.5" r="2.8" fill="#EEEEEE"/><path d="M1.6 2.8H4.4M1.6 4.3H4.4" stroke="#555555" stroke-width="0.8"/></svg>
<span class="t" style="left:136.31px;top:701.78px;font-size:13.5px;color:#BBBBBB;font-weight:normal;font-style:normal;letter-spacing:-0.946px;font-family:'Liberation Sans';"><u>6</u>: TODO</span>
<svg style="left:209px;top:702px" width="15" height="15" viewBox="0 0 15 15"><rect x="0.8" y="0.8" width="9" height="9" fill="#4A8FC6"/><circle cx="9.3" cy="9.3" r="5.2" fill="#E8A84A"/><circle cx="9.3" cy="9.3" r="3.6" fill="#E0A040"/><path d="M9.3 9.3H4.1A5.2 5.2 0 0 1 9.3 4.1Z" fill="#2EC03A"/></svg>
<span class="t" style="left:226.37px;top:701.78px;font-size:13.5px;color:#BBBBBB;font-weight:normal;font-style:normal;letter-spacing:0.087px;font-family:'Liberation Sans';"><u>9</u>: Version Control</span>
<svg style="left:1184px;top:703px" width="17" height="13" viewBox="0 0 17 13"><path d="M0 1A1 1 0 0 1 1 0H10A1 1 0 0 1 11 1V8A1 1 0 0 1 10 9H5L2.5 11.5V9H1A1 1 0 0 1 0 8Z" fill="#E8B845"/><rect x="5" y="1.5" width="1.6" height="4" fill="#3C3F41"/><rect x="5" y="6.5" width="1.6" height="1.5" fill="#3C3F41"/><text x="14" y="13" font-family="Liberation Sans" font-size="9.5" font-weight="bold" text-anchor="middle" fill="#DDDDDD">1</text></svg>
<span class="t" style="left:1205.89px;top:701.78px;font-size:13.5px;color:#BBBBBB;font-weight:normal;font-style:normal;letter-spacing:0.148px;font-family:'Liberation Sans';">Event Log</span>
<svg style="left:8px;top:725px" width="14" height="14" viewBox="0 0 14 14"><rect x="0.5" y="0.5" width="13" height="11" fill="#5E5E5E" stroke="#9A9A9A" stroke-width="1"/><path d="M0 13.3H14" stroke="#9A9A9A" stroke-width="1"/></svg>
<span class="t" style="left:28.62px;top:723.42px;font-size:15px;color:#BBBBBB;font-weight:normal;font-style:normal;letter-spacing:0.059px;font-family:'Liberation Sans';">IBus prior to 1.5.11 may cause input problems. See IDEA-78860 for details. // Do not show again. (9 minutes ago)</span>
<span class="t" style="left:1035.43px;top:723.42px;font-size:15px;color:#BBBBBB;font-weight:normal;font-style:normal;letter-spacing:-0.964px;font-family:'Liberation Sans';">33:1</span>
<span class="t" style="left:1072.77px;top:723.42px;font-size:15px;color:#BBBBBB;font-weight:normal;font-style:normal;letter-spacing:-2.674px;font-family:'Liberation Sans';">LF</span>
<svg style="left:1091px;top:726px" width="5" height="10"><path d="M0 4L2.5 0.5L5 4ZM0 6L2.5 9.5L5 6Z" fill="#BBBBBB"/></svg>
<span class="t" style="left:1105.84px;top:723.42px;font-size:15px;color:#BBBBBB;font-weight:normal;font-style:normal;letter-spacing:0.078px;font-family:'Liberation Sans';">UTF-8</span>
<svg style="left:1151px;top:726px" width="5" height="10"><path d="M0 4L2.5 0.5L5 4ZM0 6L2.5 9.5L5 6Z" fill="#BBBBBB"/></svg>
<span class="t" style="left:1165.25px;top:723.42px;font-size:15px;color:#BBBBBB;font-weight:normal;font-style:normal;letter-spacing:0.066px;font-family:'Liberation Sans';">Git: master</span>
<svg style="left:1242px;top:726px" width="5" height="10"><path d="M0 4L2.5 0.5L5 4ZM0 6L2.5 9.5L5 6Z" fill="#BBBBBB"/></svg>
<svg style="left:1258px;top:728px" width="11" height="10" viewBox="0 0 11 10"><rect x="0" y="4" width="8" height="6" fill="#9A9A9A"/><path d="M2 4V2.5A2 2 0 0 1 6 2.5" stroke="#9A9A9A" stroke-width="1.4" fill="none"/></svg>
<svg style="left:1282px;top:725px" width="14" height="15" viewBox="0 0 14 15"><path d="M3.5 5.5V3.5A3.5 3 0 0 1 10.5 3.5V5.5" stroke="#9A9A9A" stroke-width="1.2" fill="#5A5A5A"/><path d="M1 6H13" stroke="#9A9A9A" stroke-width="1.4"/><path d="M3 7.5V10A4 4 0 0 0 11 10V7.5" stroke="#9A9A9A" stroke-width="1.2" fill="none"/><path d="M4.5 10.5H9.5" stroke="#9A9A9A" stroke-width="1.3"/><circle cx="5.3" cy="8.3" r="0.7" fill="#9A9A9A"/><circle cx="8.7" cy="8.3" r="0.7" fill="#9A9A9A"/></svg>
</body></html>
